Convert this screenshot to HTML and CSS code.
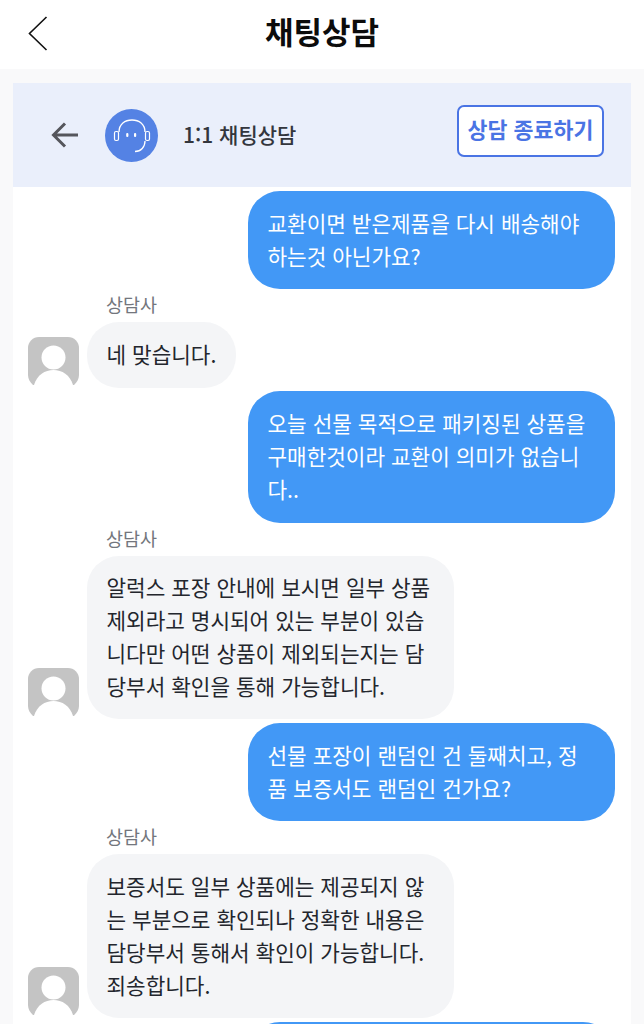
FILE: index.html
```html
<!DOCTYPE html>
<html lang="ko">
<head>
<meta charset="utf-8">
<title>채팅상담</title>
<link rel="stylesheet" href="styles.css">
</head>
<body>
<header class="top">
  <svg class="top-back" width="20" height="36" viewBox="0 0 20 36"><path d="M18.5 1 L1.5 17.5 L18.5 34" fill="none" stroke="#111" stroke-width="1.6"/></svg>
  <h1 class="top-title">채팅상담</h1>
</header>
<main class="panel">
  <div class="chat-head">
    <svg class="head-arrow" width="28" height="26" viewBox="0 0 28 26"><path d="M14 1.5 L2.5 13 L14 24.500 M3 13 H27" fill="none" stroke="#55565c" stroke-width="3"/></svg>
    <svg class="head-logo" width="53" height="53" viewBox="0 0 53 53">
      <circle cx="26.500" cy="26.500" r="26.500" fill="#5482e4"/>
      <path d="M14 23 C14 15 20 11 27 11 C34 11 40 15 40 23 M40 32 C40 38 36 42.500 30 42.500" fill="none" stroke="#fff" stroke-width="1.300"/>
      <rect x="9.500" y="22.500" width="4" height="9" rx="1.500" fill="none" stroke="#fff" stroke-width="1.200"/>
      <rect x="40.500" y="22.500" width="4" height="9" rx="1.500" fill="none" stroke="#fff" stroke-width="1.200"/>
      <rect x="21.200" y="24" width="2.200" height="4" rx="1" fill="#fff"/>
      <rect x="29" y="24" width="2.200" height="4" rx="1" fill="#fff"/>
    </svg>
    <span class="head-name">1:1 채팅상담</span>
    <button class="end-btn">상담 종료하기</button>
  </div>
  <div class="messages">
    <div class="bubble mine">교환이면 받은제품을 다시 배송해야<br>하는것 아닌가요?</div>
    <div class="agent-msg">
      <div class="agent-name">상담사</div>
      <div class="agent-row">
        <svg class="avatar" viewBox="0 0 51 51"><use href="#person"/></svg>
        <div class="bubble theirs">네 맞습니다.</div>
      </div>
    </div>
    <div class="bubble mine">오늘 선물 목적으로 패키징된 상품을<br>구매한것이라 교환이 의미가 없습니<br>다..</div>
    <div class="agent-msg">
      <div class="agent-name">상담사</div>
      <div class="agent-row">
        <svg class="avatar" viewBox="0 0 51 51"><use href="#person"/></svg>
        <div class="bubble theirs wide">알럭스 포장 안내에 보시면 일부 상품<br>제외라고 명시되어 있는 부분이 있습<br>니다만 어떤 상품이 제외되는지는 담<br>당부서 확인을 통해 가능합니다.</div>
      </div>
    </div>
    <div class="bubble mine">선물 포장이 랜덤인 건 둘째치고, 정<br>품 보증서도 랜덤인 건가요?</div>
    <div class="agent-msg">
      <div class="agent-name">상담사</div>
      <div class="agent-row">
        <svg class="avatar" viewBox="0 0 51 51"><use href="#person"/></svg>
        <div class="bubble theirs wide">보증서도 일부 상품에는 제공되지 않<br>는 부분으로 확인되나 정확한 내용은<br>담당부서 통해서 확인이 가능합니다.<br>죄송합니다.</div>
      </div>
    </div>
    <div class="bubble mine">&nbsp;</div>
  </div>
</main>
<svg class="defs" width="0" height="0">
  <defs>
    <g id="person">
      <path d="M11 0 H40 A11 11 0 0 1 51 11 V38 C51 42 49 45 46 48 H5 C2 45 0 42 0 38 V11 A11 11 0 0 1 11 0 Z" fill="#c4c4c4"/>
      <circle cx="25.500" cy="20.500" r="12" fill="#fff"/>
      <path d="M6 48 C9 38 17 33 25.500 33 C34 33 42 38 45 48 L42 51 H9 Z" fill="#fff"/>
    </g>
  </defs>
</svg>
</body>
</html>
```
FILE: styles.css
```css
* { box-sizing: border-box; }
html, body { margin: 0; padding: 0; }
body {
  width: 644px;
  height: 1024px;
  overflow: hidden;
  background: #f9f9fa;
  font-family: "Noto Sans CJK KR", "Noto Sans", sans-serif;
}
.defs { position: absolute; }
.top {
  position: relative;
  height: 69px;
  background: #fff;
  display: flex;
  align-items: center;
  justify-content: center;
}
.top-back { position: absolute; left: 28px; top: 16px; }
.top-title {
  margin: 0 0 7px;
  font-size: 31px;
  font-weight: 700;
  color: #0c0c0c;
  line-height: 40px;
}
.panel { margin: 14px 13px 0; height: 941px; overflow: hidden; background: #fff; }
.chat-head {
  height: 104px;
  background: #eaeffb;
  display: flex;
  align-items: center;
  padding: 0 27px 0 38px;
}
.head-arrow { margin-right: 26px; }
.head-logo { margin-right: 25px; }
.head-name {
  flex: 1;
  margin-bottom: 2px;
  font-size: 21px;
  font-weight: 500;
  color: #33363d;
}
.end-btn {
  width: 147px;
  height: 52px;
  margin-bottom: 9px;
  padding: 0 0 4px;
  border: 2px solid #4a74e4;
  border-radius: 7px;
  background: #fff;
  color: #4a74e4;
  font: 700 21.700px "Noto Sans CJK KR", sans-serif;
}
.messages {
  padding: 4px 16px 0 15px;
  display: flex;
  flex-direction: column;
}
.bubble {
  flex: none;
  width: fit-content;
  padding: 15.900px 19.500px 16.900px;
  border-radius: 32px;
  font-size: 21.300px;
  line-height: 32.800px;
  white-space: nowrap;
}
.mine {
  align-self: flex-end;
  width: 367px;
  background: #4298f6;
  color: #fff;
}
.theirs { background: #f4f5f7; color: #23262d; }
.wide { width: 367px; }
.agent-msg { margin-bottom: 3.400px; }
.agent-name {
  margin-left: 78px;
  padding-bottom: 3px;
  font-size: 18.500px;
  line-height: 30px;
  color: #73767d;
}
.agent-row { display: flex; align-items: flex-end; gap: 8px; }
.avatar { flex: none; width: 51px; height: 51px; }
```
